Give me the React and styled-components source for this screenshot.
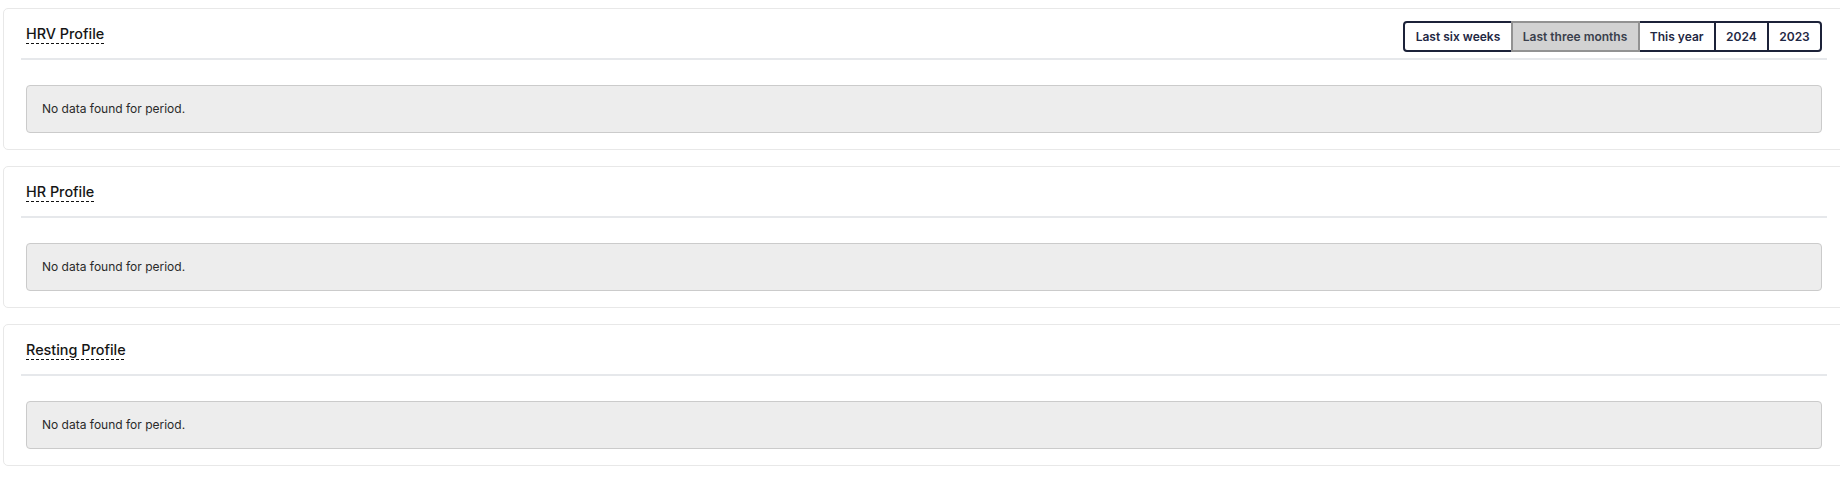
import React, { useState } from "react";
import styled, { createGlobalStyle } from "styled-components";

const GlobalStyle = createGlobalStyle`
  * { box-sizing: border-box; }
  html, body { margin: 0; padding: 0; background: #ffffff; overflow: hidden; }
  body { font-family: Inter, "Noto Sans", "Liberation Sans", sans-serif; color: #111; }
`;

const Page = styled.div`
  display: flex;
  flex-direction: column;
  gap: 16px;
  padding: 8px 0 0 3px;
`;

const Card = styled.section`
  margin-right: -5px;
  background: #fff;
  border: 1px solid #e8e8e8;
  border-radius: 5px;
  padding: 0 22px 16px;
`;

const Header = styled.div`
  display: flex;
  align-items: flex-start;
  justify-content: space-between;
  height: 51px;
  margin: 0 -5px;
  padding: 12px 5px 6px;
  border-bottom: 2px solid #e6e8eb;
`;

const Title = styled.h2`
  margin: 4px 0 0;
  padding-bottom: 2px;
  font-size: 14.4px;
  line-height: 17px;
  font-weight: 500;
  color: #151515;
  background-image: linear-gradient(to right, #111 0 3px, transparent 3px 5px);
  background-size: 5px 1px;
  background-repeat: repeat-x;
  background-position: 0 100%;
`;

const Group = styled.div`
  display: flex;
`;

const PeriodButton = styled.button`
  position: relative;
  z-index: ${(p) => (p.$active ? 1 : 0)};
  margin-left: -2px;
  height: 31px;
  padding: 0 10.25px;
  font-family: Inter, "Noto Sans", "Liberation Sans", sans-serif;
  font-size: 12px;
  font-weight: 600;
  line-height: 27px;
  color: ${(p) => (p.$active ? "#3a3f4c" : "#1f2844")};
  background: ${(p) => (p.$active ? "#d2d2d2" : "#ffffff")};
  border: 2px solid ${(p) => (p.$active ? "#929292" : "#1c2239")};
  border-radius: 0;
  cursor: pointer;
  white-space: nowrap;

  &:first-child {
    margin-left: 0;
    border-radius: 4px 0 0 4px;
  }
  &:last-child {
    border-radius: 0 4px 4px 0;
  }
`;

const Alert = styled.div`
  margin-top: 25px;
  padding: 16px 15px;
  border: 1px solid #cbcbcb;
  border-radius: 4px;
  background: #ededed;
  font-size: 12px;
  line-height: 14px;
  color: #2a2a2a;
`;

const periods = ["Last six weeks", "Last three months", "This year", "2024", "2023"];

function Profile({ title, withPeriods, period, onPeriod }) {
  return (
    <Card>
      <Header>
        <Title>{title}</Title>
        {withPeriods && (
          <Group>
            {periods.map((p) => (
              <PeriodButton key={p} $active={p === period} onClick={() => onPeriod(p)}>
                {p}
              </PeriodButton>
            ))}
          </Group>
        )}
      </Header>
      <Alert>No data found for period.</Alert>
    </Card>
  );
}

export default function App() {
  const [period, setPeriod] = useState("Last three months");
  return (
    <>
      <GlobalStyle />
      <Page>
        <Profile title="HRV Profile" withPeriods period={period} onPeriod={setPeriod} />
        <Profile title="HR Profile" />
        <Profile title="Resting Profile" />
      </Page>
    </>
  );
}
